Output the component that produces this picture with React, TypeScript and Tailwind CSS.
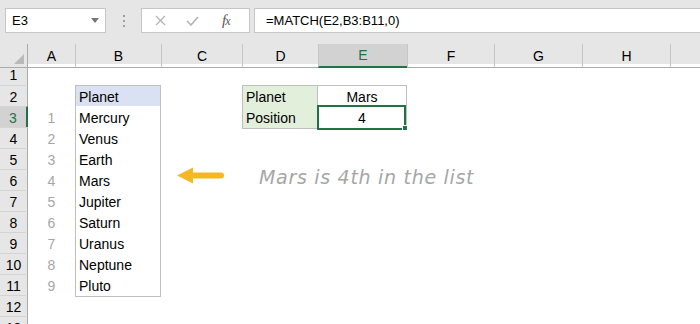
import React from "react"

const COLS = ["A", "B", "C", "D", "E", "F", "G", "H", ""]
const PLANETS = ["Mercury", "Venus", "Earth", "Mars", "Jupiter", "Saturn", "Uranus", "Neptune", "Pluto"]
const GRID = "grid grid-cols-[28px_47px_86px_81px_76px_89px_87px_88px_88px_30px]"
const LINE = "border-[#bfbfbf]"

function Cell({ r, c }: { r: number; c: number }) {
  const base = "relative h-full flex items-center pt-px overflow-visible whitespace-nowrap leading-[18px]"

  // index numbers in column A
  if (c === 0 && r >= 3 && r <= 11) {
    return <div className={`${base} justify-center text-[#a6a6a6]`}>{r - 2}</div>
  }

  // planet list in column B
  if (c === 1 && r >= 2 && r <= 11) {
    return (
      <div
        className={`${base} pl-[3px] border-x border-b ${LINE} ${
          r === 2 ? "border-t bg-[#d9e1f2]" : "bg-white"
        }`}
      >
        {r === 2 ? "Planet" : PLANETS[r - 3]}
      </div>
    )
  }

  // lookup labels in column D
  if (c === 3 && (r === 2 || r === 3)) {
    return (
      <div className={`${base} pl-[3px] bg-[#e2efda] border-x border-b ${LINE} ${r === 2 ? "border-t" : ""}`}>
        {r === 2 ? "Planet" : "Position"}
      </div>
    )
  }

  // values in column E
  if (c === 4 && (r === 2 || r === 3)) {
    return (
      <div className={`${base} justify-center bg-white border-r border-b ${LINE} ${r === 2 ? "border-t" : ""}`}>
        {r === 2 ? "Mars" : "4"}
        {r === 3 && (
          <>
            <div className="absolute -left-px -top-px right-0 -bottom-[2px] border-2 border-[#217346] z-10" />
            <div className="absolute -right-[2px] -bottom-[3px] w-[6px] h-[6px] bg-[#217346] border border-white z-20" />
          </>
        )}
      </div>
    )
  }

  return <div className={base} />
}

export default function App() {
  return (
    <div className="w-[700px] h-[324px] overflow-hidden bg-white font-['Liberation_Sans',Arial,sans-serif] text-[14px] text-black">
      {/* Formula bar */}
      <div className="h-[44px] bg-[#e6e6e6] flex items-start pt-[8px] pl-[5px] gap-[4px]">
        <div className="w-[101px] h-[25px] bg-white border border-[#c6c6c6] flex items-center justify-between pl-[6px] pr-[6px] text-[13px]">
          <span>E3</span>
          <svg width="8" height="5" viewBox="0 0 8 5">
            <path d="M0 0 L8 0 L4 5 Z" fill="#777" />
          </svg>
        </div>
        <div className="w-[27px] h-[25px] flex flex-col items-center justify-center gap-[3px]">
          <span className="w-[2px] h-[2px] bg-[#a0a0a0]" />
          <span className="w-[2px] h-[2px] bg-[#a0a0a0]" />
          <span className="w-[2px] h-[2px] bg-[#a0a0a0]" />
        </div>
        <div className="w-[109px] h-[25px] bg-white border border-[#c6c6c6] flex items-center pl-[13px] gap-[20px]">
          <svg width="11" height="11" viewBox="0 0 11 11">
            <path d="M1 1 L10 10 M10 1 L1 10" stroke="#b4b4b4" strokeWidth="1.3" />
          </svg>
          <svg width="13" height="10" viewBox="0 0 13 10">
            <path d="M1 5 L5 9 L12 1" stroke="#b4b4b4" strokeWidth="1.6" fill="none" />
          </svg>
          <span className="ml-[3px] font-['Liberation_Serif',serif] italic text-[15px] text-[#555] tracking-[-1px]">
            f<span className="text-[12px]">x</span>
          </span>
        </div>
        <div className="flex-1 h-[25px] bg-white border border-[#c6c6c6] border-r-0 flex items-center pl-[11px] text-[13px]">
          =MATCH(E2,B3:B11,0)
        </div>
      </div>

      {/* Sheet */}
      <div className="relative">
        {/* Column headers */}
        <div className={`${GRID} h-[20px] bg-[#e6e6e6]`}>
          <div className="relative border-r border-r-[#ababab] border-b border-b-[#ababab]">
            <svg className="absolute right-[3px] bottom-[3px]" width="10" height="10" viewBox="0 0 10 10">
              <path d="M10 0 L10 10 L0 10 Z" fill="#b9b9b9" />
            </svg>
          </div>
          {COLS.map((col, i) => (
            <div
              key={i}
              className={`flex items-center justify-center pt-px border-b ${
                i > 0 ? "border-l border-l-[#c6c6c6]" : ""
              } ${
                col === "E"
                  ? "bg-[#d2d2d2] text-[#217346] border-b-2 border-b-[#217346]"
                  : "border-b-[#ababab]"
              }`}
            >
              {col}
            </div>
          ))}
        </div>

        {/* Rows */}
        {Array.from({ length: 13 }, (_, k) => k + 1).map((r) => (
          <div key={r} className={`${GRID} h-[21px]`}>
            <div
              className={`flex items-center justify-center pt-px ${
                r > 1 ? "border-t border-t-[#d4d4d4]" : ""
              } ${
                r === 3
                  ? "bg-[#d2d2d2] text-[#217346] border-r-2 border-r-[#217346]"
                  : "bg-[#e6e6e6] border-r border-r-[#ababab]"
              }`}
            >
              {r}
            </div>
            {COLS.map((_, c) => (
              <Cell key={c} r={r} c={c} />
            ))}
          </div>
        ))}

        {/* Annotation arrow */}
        <svg className="absolute left-[177px] top-[123px]" width="50" height="18" viewBox="0 0 50 18">
          <path d="M0 8.5 L16 0.5 L16 16.5 Z" fill="#f4b921" />
          <path d="M14 8.5 L44 8.5" stroke="#f4b921" strokeWidth="6" strokeLinecap="round" />
        </svg>
        <div className="absolute left-[259px] top-[119px] font-['DejaVu_Sans',sans-serif] italic text-[19px] text-[#a6a6a6] tracking-[0.7px]">
          Mars is 4th in the list
        </div>
      </div>
    </div>
  )
}
